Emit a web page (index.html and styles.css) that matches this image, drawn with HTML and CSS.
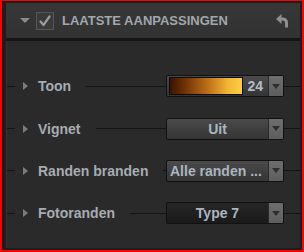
FILE: index.html
```html
<!DOCTYPE html>
<html lang="en">
<head>
  <meta charset="UTF-8" />
  <title>Laatste aanpassingen</title>
  <link rel="stylesheet" href="styles.css">
</head>
<body>
  <div class="frame">
    <div class="panel">

      <!-- Header -->
      <div class="panel-header">
        <span class="disclosure-down"></span>
        <span class="checkbox">
          <svg width="16" height="16" viewBox="0 0 16 16">
            <path d="M3.5 8.5 L6.5 12 L12.5 3.5" fill="none" stroke="#9c9c9c" stroke-width="2.2" stroke-linecap="round" stroke-linejoin="round"/>
          </svg>
        </span>
        <span class="panel-title">LAATSTE AANPASSINGEN</span>
        <span class="undo">
          <svg width="13" height="14" viewBox="0 0 13 14">
            <polygon points="0,5 5.5,0 5.5,10" fill="#8e8e8e"/>
            <path d="M4 5 H6.5 Q10.5 5 10.5 9 V13.5" fill="none" stroke="#8e8e8e" stroke-width="3"/>
          </svg>
        </span>
      </div>

      <!-- Rows -->
      <div class="panel-body">
        <div class="row">
          <span class="lead"></span>
          <span class="label"><span class="disclosure-right"></span>Toon</span>
          <span class="rule"></span>
          <div class="control">
            <span class="tone-bar"></span>
            <span class="tone-value">24</span>
            <span class="arrow"></span>
          </div>
          <span class="tail"></span>
        </div>

        <div class="row">
          <span class="lead"></span>
          <span class="label"><span class="disclosure-right"></span>Vignet</span>
          <span class="rule"></span>
          <div class="control">
            <span class="value center">Uit</span>
            <span class="arrow"></span>
          </div>
          <span class="tail"></span>
        </div>

        <div class="row">
          <span class="lead"></span>
          <span class="label"><span class="disclosure-right"></span>Randen branden</span>
          <span class="rule"></span>
          <div class="control">
            <span class="value">Alle randen ...</span>
            <span class="arrow"></span>
          </div>
          <span class="tail"></span>
        </div>

        <div class="row">
          <span class="lead"></span>
          <span class="label"><span class="disclosure-right"></span>Fotoranden</span>
          <span class="rule"></span>
          <div class="control dark">
            <span class="value center">Type 7</span>
            <span class="arrow"></span>
          </div>
          <span class="tail"></span>
        </div>
      </div>

    </div>
  </div>
</body>
</html>
```

FILE: styles.css
```css
/* Reset & Base */
* {
  box-sizing: border-box;
  margin: 0;
  padding: 0;
}

body {
  font-family: 'Liberation Sans', Arial, sans-serif;
  background-color: #f00;
}

/* Frame */
.frame {
  width: 304px;
  height: 252px;
  border: 2px solid #f00;
  border-top-width: 1px;
  background-color: #1d1d1d;
  padding: 2px 2px 2px 4px;
}

.panel {
  height: 100%;
  display: flex;
  flex-direction: column;
  background-color: #2a2a2a;
}

/* Header */
.panel-header {
  height: 38px;
  display: flex;
  align-items: center;
  padding: 0 11px 0 14px;
  background: linear-gradient(#373737, #323232);
  border-bottom: 3px solid #151515;
  flex-shrink: 0;
}

.disclosure-down {
  width: 0;
  height: 0;
  border-left: 5px solid transparent;
  border-right: 5px solid transparent;
  border-top: 5px solid #8c8c8c;
  margin-right: 6px;
}

.checkbox {
  width: 18px;
  height: 18px;
  border: 1px solid #555;
  background-color: #3a3a3a;
  display: flex;
  align-items: center;
  justify-content: center;
  margin-right: 8px;
}

.panel-title {
  flex: 1;
  font-size: 13px;
  font-weight: bold;
  color: #a2a7ac;
}

.undo {
  display: flex;
}

/* Body rows */
.panel-body {
  flex: 1;
  border-left: 1px solid #333;
  padding-top: 24px;
}

.row {
  height: 42.4px;
  display: flex;
  align-items: center;
}

.lead,
.rule,
.tail {
  height: 1px;
  background-color: #141414;
}

.lead {
  width: 8px;
}

.rule {
  flex: 1;
}

.tail {
  width: 16px;
}

.label {
  display: flex;
  align-items: center;
  padding: 0 15px 0 8px;
  font-size: 14px;
  font-weight: bold;
  color: #a6acb2;
  white-space: nowrap;
}

.disclosure-right {
  width: 0;
  height: 0;
  border-top: 4.5px solid transparent;
  border-bottom: 4.5px solid transparent;
  border-left: 5px solid #7c7c7c;
  margin-right: 10px;
}

/* Controls */
.control {
  width: 118px;
  height: 22px;
  display: flex;
  border: 1px solid #111;
  border-radius: 2px;
  background: linear-gradient(#4a4a4a, #353535);
  overflow: hidden;
}

.control.dark {
  background: linear-gradient(#262626, #1a1a1a);
}

.value {
  flex: 1;
  padding-left: 3px;
  font-size: 14px;
  font-weight: bold;
  line-height: 20px;
  color: #aab5c0;
  white-space: nowrap;
}

.value.center {
  text-align: center;
  padding-left: 0;
}

.tone-bar {
  width: 74px;
  margin: 1px 0 1px 2px;
  border: 1px solid #0c0c0c;
  background: linear-gradient(to right, #3a1300, #7a3a06 25%, #c27518 55%, #f1b534 80%, #ffce45);
}

.tone-value {
  flex: 1;
  text-align: right;
  padding-right: 5px;
  font-size: 14px;
  font-weight: bold;
  line-height: 20px;
  color: #b4bdc6;
}

.arrow {
  width: 15px;
  border-left: 1px solid #2a2a2a;
  background: linear-gradient(#6e6e6e, #5e5e5e);
  display: flex;
  align-items: center;
  justify-content: center;
}

.arrow::after {
  content: "";
  border-left: 4px solid transparent;
  border-right: 4px solid transparent;
  border-top: 5px solid #2e2e2e;
}
```
